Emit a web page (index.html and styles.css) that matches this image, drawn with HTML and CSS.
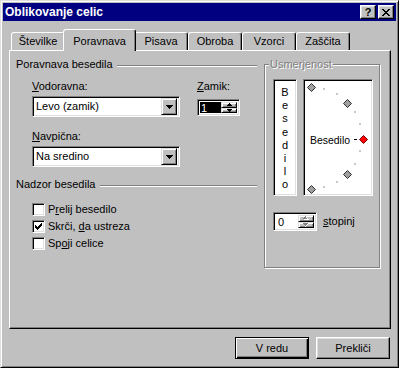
FILE: index.html
```html
<!DOCTYPE html>
<html>
<head>
<meta charset="utf-8">
<link rel="stylesheet" href="styles.css">
</head>
<body>
<div class="window">
  <div class="caption">
    <span class="title">Oblikovanje celic</span>
    <span class="cap-btns">
      <span class="cbtn help">?</span>
      <span class="cbtn close"><svg width="8" height="7" viewBox="0 0 8 7" shape-rendering="crispEdges"><path d="M0 0h2v1H0zM6 0h2v1H6zM1 1h2v1H1zM5 1h2v1H5zM2 2h4v1H2zM3 3h2v1H3zM2 4h4v1H2zM1 5h2v1H1zM5 5h2v1H5zM0 6h2v1H0zM6 6h2v1H6z" fill="#000"/></svg></span>
    </span>
  </div>
  <div class="client">
    <div class="tabs">
      <div class="tab">Številke</div>
      <div class="tab active">Poravnava</div>
      <div class="tab">Pisava</div>
      <div class="tab">Obroba</div>
      <div class="tab">Vzorci</div>
      <div class="tab">Zaščita</div>
    </div>
    <div class="panel">
      <div class="left">
        <div class="grp-h"><span>Poravnava besedila</span><i class="rule"></i></div>
        <div class="align-row">
          <div class="col-main">
            <div class="lbl"><u>V</u>odoravna:</div>
            <div class="combo"><span class="ctext">Levo (zamik)</span><span class="drop"><svg width="7" height="4" viewBox="0 0 7 4" shape-rendering="crispEdges"><path d="M0 0h7v1H0zM1 1h5v1H1zM2 2h3v1H2zM3 3h1v1H3z" fill="#000"/></svg></span></div>
            <div class="lbl lbl2"><u>N</u>avpična:</div>
            <div class="combo"><span class="ctext">Na sredino</span><span class="drop"><svg width="7" height="4" viewBox="0 0 7 4" shape-rendering="crispEdges"><path d="M0 0h7v1H0zM1 1h5v1H1zM2 2h3v1H2zM3 3h1v1H3z" fill="#000"/></svg></span></div>
          </div>
          <div class="col-zamik">
            <div class="lbl"><u>Z</u>amik:</div>
            <div class="spin spin-zamik">
              <span class="val sel">1</span>
              <span class="arrows">
                <span class="arr up"><svg width="5" height="3" viewBox="0 0 5 3" shape-rendering="crispEdges"><path d="M2 0h1v1H2zM1 1h3v1H1zM0 2h5v1H0z" fill="#000"/></svg></span>
                <span class="arr dn"><svg width="5" height="3" viewBox="0 0 5 3" shape-rendering="crispEdges"><path d="M0 0h5v1H0zM1 1h3v1H1zM2 2h1v1H2z" fill="#000"/></svg></span>
              </span>
            </div>
          </div>
        </div>
        <div class="grp-h grp-h2"><span>Nadzor besedila</span><i class="rule"></i></div>
        <div class="checks">
          <div class="chk"><span class="cb"></span><span>P<u>r</u>elij besedilo</span></div>
          <div class="chk"><span class="cb"><svg width="7" height="7" viewBox="0 0 7 7" shape-rendering="crispEdges"><path d="M0 2h1v3H0zM1 3h1v3H1zM2 4h1v3H2zM3 3h1v3H3zM4 2h1v3H4zM5 1h1v3H5zM6 0h1v3H6z" fill="#000"/></svg></span><span>Skrči, <u>d</u>a ustreza</span></div>
          <div class="chk"><span class="cb"></span><span>Sp<u>o</u>ji celice</span></div>
        </div>
      </div>
      <div class="orient">
        <span class="legend">Usmerjenost</span>
        <div class="orient-row">
          <div class="vbox">
            <span>B</span><span>e</span><span>s</span><span>e</span><span>d</span><span>i</span><span>l</span><span>o</span>
          </div>
          <div class="dial">
            <svg width="66" height="113" viewBox="0 0 66 113">
              <g fill="#c8c8c8" shape-rendering="crispEdges">
                <rect x="17" y="6" width="2" height="2"/>
                <rect x="30" y="11" width="2" height="2"/>
                <rect x="48" y="29" width="2" height="2"/>
                <rect x="53" y="41" width="2" height="2"/>
                <rect x="53" y="68" width="2" height="2"/>
                <rect x="48" y="81" width="2" height="2"/>
                <rect x="30" y="99" width="2" height="2"/>
                <rect x="17" y="104" width="2" height="2"/>
              </g>
              <g fill="#a0a0a0" stroke="#303030" stroke-width="1">
                <polygon points="5.5,1.5 9.5,5.5 5.5,9.5 1.5,5.5"/>
                <polygon points="41.5,17.5 45.5,21.5 41.5,25.5 37.5,21.5"/>
                <polygon points="41.5,88.5 45.5,92.5 41.5,96.5 37.5,92.5"/>
                <polygon points="5.5,103.5 9.5,107.5 5.5,111.5 1.5,107.5"/>
              </g>
              <polygon points="57.5,53.5 61.5,57.5 57.5,61.5 53.5,57.5" fill="#ff0000" stroke="#800000" stroke-width="1"/>
              <rect x="48" y="57" width="3" height="1" fill="#000" shape-rendering="crispEdges"/>
              <text x="4" y="62" class="dial-text" textLength="40" lengthAdjust="spacingAndGlyphs">Besedilo</text>
            </svg>
          </div>
        </div>
        <div class="deg-row">
          <div class="spin spin-deg">
            <span class="val">0</span>
            <span class="arrows">
              <span class="arr up"><svg width="6" height="4" viewBox="0 0 6 4" shape-rendering="crispEdges"><path d="M2 0h1v1H2zM1 1h3v1H1zM0 2h5v1H0z" fill="#808080"/><path d="M3 1h1v1H3zM4 2h1v1H4zM1 3h5v1H1z" fill="#fff"/></svg></span>
              <span class="arr dn"><svg width="6" height="4" viewBox="0 0 6 4" shape-rendering="crispEdges"><path d="M0 0h5v1H0zM1 1h3v1H1zM2 2h1v1H2z" fill="#808080"/><path d="M5 0h1v1H5zM4 1h1v1H4zM3 2h1v1H3zM2 3h1v1H2z" fill="#fff"/></svg></span>
            </span>
          </div>
          <span class="deg-lbl"><u>s</u>topinj</span>
        </div>
      </div>
    </div>
    <div class="actions">
      <div class="btn default">V redu</div>
      <div class="btn">Prekliči</div>
    </div>
  </div>
</div>
</body>
</html>
```
FILE: styles.css
```css
* { box-sizing: border-box; }

body {
  margin: 0;
  background: #c0c0c0;
  font-family: "Liberation Sans", Arial, sans-serif;
  font-size: 11px;
  color: #000;
}

u { text-decoration: underline; text-underline-offset: 1px; }

.window {
  width: 399px;
  height: 368px;
  background: #c0c0c0;
  border: 1px solid;
  border-color: #dfdfdf #000 #000 #dfdfdf;
  box-shadow: inset 1px 1px #fff, inset -1px -1px #808080;
  padding: 2px;
  display: flex;
  flex-direction: column;
}

.caption {
  height: 18px;
  flex: none;
  background: #000080;
  color: #fff;
  display: flex;
  align-items: center;
  justify-content: space-between;
  padding: 0 2px 0 2px;
}

.title {
  font-weight: bold;
  font-size: 12px;
  line-height: 14px;
}

.cap-btns {
  display: flex;
  gap: 2px;
}

.cbtn {
  width: 16px;
  height: 14px;
  background: #c0c0c0;
  border: 1px solid;
  border-color: #fff #000 #000 #fff;
  box-shadow: inset -1px -1px #808080, inset 1px 1px #dfdfdf;
  display: flex;
  align-items: center;
  justify-content: center;
  color: #000;
}

.cbtn.help {
  font-weight: bold;
  font-size: 11px;
  line-height: 12px;
}

.client {
  flex: 1;
  display: flex;
  flex-direction: column;
  padding: 8px 5px 0 6px;
}

.tabs {
  display: flex;
  height: 21px;
  padding-left: 2px;
  flex: none;
}

.tab {
  width: 54px;
  height: 18px;
  margin-top: 3px;
  border: 1px solid;
  border-bottom: 0;
  border-color: #fff #000 transparent #fff;
  box-shadow: inset -1px 0 #808080;
  border-radius: 3px 3px 0 0;
  text-align: center;
  line-height: 16px;
  background: #c0c0c0;
}

.tab.active {
  position: relative;
  z-index: 1;
  width: 73px;
  height: 22px;
  margin: 0 -2px -1px -2px;
  padding-top: 4px;
  line-height: 15px;
}

.panel {
  flex: none;
  width: 382px;
  height: 279px;
  border: 1px solid;
  border-color: #fff #000 #000 #fff;
  box-shadow: inset -1px -1px #808080;
  display: flex;
  padding-left: 6px;
}

.left {
  width: 241px;
  padding-top: 7px;
  display: flex;
  flex-direction: column;
}

.grp-h {
  display: flex;
  align-items: center;
  height: 13px;
  line-height: 13px;
}

.grp-h .rule {
  flex: 1;
  height: 2px;
  border-top: 1px solid #808080;
  border-bottom: 1px solid #fff;
  margin-left: 4px;
  margin-top: 3px;
}

.grp-h2 { margin-top: 11px; }

.align-row {
  display: flex;
  padding-left: 16px;
  margin-top: 9px;
}

.col-main {
  width: 148px;
  display: flex;
  flex-direction: column;
}

.col-zamik {
  margin-left: 17px;
  display: flex;
  flex-direction: column;
}

.lbl {
  height: 13px;
  line-height: 13px;
}

.lbl2 { margin-top: 13px; }

.combo {
  margin-top: 3px;
  height: 21px;
  display: flex;
  align-items: center;
  background: #fff;
  border: 1px solid;
  border-color: #808080 #fff #fff #808080;
  box-shadow: inset 1px 1px #000, inset -1px -1px #dfdfdf;
  padding: 2px 2px 2px 3px;
}

.ctext { flex: 1; line-height: 13px; }

.drop {
  width: 16px;
  height: 17px;
  background: #c0c0c0;
  border: 1px solid;
  border-color: #dfdfdf #000 #000 #dfdfdf;
  box-shadow: inset 1px 1px #fff, inset -1px -1px #808080;
  display: flex;
  align-items: center;
  justify-content: center;
}

.spin {
  display: flex;
  border: 1px solid;
  border-color: #808080 #fff #fff #808080;
  box-shadow: inset 1px 1px #000, inset -1px -1px #dfdfdf;
  padding: 2px;
  background: #fff;
}

.spin .val {
  flex: 1;
  line-height: 13px;
  padding-left: 1px;
}

.spin .val.sel {
  background: #000;
  color: #fff;
}

.arrows {
  width: 16px;
  display: flex;
  flex-direction: column;
}

.arr {
  background: #c0c0c0;
  border: 1px solid;
  border-color: #dfdfdf #000 #000 #dfdfdf;
  box-shadow: inset 1px 1px #fff, inset -1px -1px #808080;
  display: flex;
  align-items: center;
  justify-content: center;
}

.spin-zamik {
  width: 43px;
  height: 17px;
  margin-top: 6px;
}

.spin-zamik .arr.up { height: 7px; }
.spin-zamik .arr.dn { height: 6px; }

.spin-deg {
  width: 44px;
  height: 19px;
}

.spin-deg .val { padding-left: 2px; line-height: 15px; }
.spin-deg .arr.up { height: 8px; }
.spin-deg .arr.dn { height: 7px; }

.checks {
  margin-top: 10px;
  padding-left: 16px;
  display: flex;
  flex-direction: column;
}

.chk {
  height: 17px;
  display: flex;
  align-items: center;
  gap: 3px;
  line-height: 13px;
}

.cb {
  width: 13px;
  height: 13px;
  background: #fff;
  border: 1px solid;
  border-color: #808080 #fff #fff #808080;
  box-shadow: inset 1px 1px #000, inset -1px -1px #dfdfdf;
  display: flex;
  align-items: center;
  justify-content: center;
}

.orient {
  position: relative;
  width: 116px;
  height: 204px;
  margin-left: 7px;
  margin-top: 13px;
  border: 1px solid #808080;
  box-shadow: inset 1px 1px #fff, 1px 1px #fff;
  padding: 14px 0 0 8px;
}

.legend {
  position: absolute;
  top: -7px;
  left: 4px;
  padding: 0 1px;
  background: #c0c0c0;
  color: #808080;
  text-shadow: 1px 1px #fff;
  line-height: 13px;
}

.orient-row {
  display: flex;
  gap: 6px;
}

.vbox, .dial {
  height: 117px;
  background: #fff;
  border: 1px solid;
  border-color: #808080 #fff #fff #808080;
  box-shadow: inset 1px 1px #000, inset -1px -1px #dfdfdf;
}

.vbox {
  width: 24px;
  padding-top: 6px;
  display: flex;
  flex-direction: column;
  align-items: center;
}

.vbox span {
  display: block;
  line-height: 13.2px;
  height: 13.2px;
}

.dial {
  width: 70px;
  padding: 2px;
}

.dial svg { display: block; }

.dial-text {
  font-family: "Liberation Sans", Arial, sans-serif;
  font-size: 11px;
  fill: #000;
}

.deg-row {
  display: flex;
  align-items: center;
  margin-top: 16px;
}

.deg-lbl {
  margin-left: 6px;
  line-height: 13px;
}

.actions {
  display: flex;
  justify-content: flex-end;
  gap: 7px;
  margin-top: 8px;
  padding-right: 1px;
}

.btn {
  width: 74px;
  height: 22px;
  background: #c0c0c0;
  border: 1px solid;
  border-color: #fff #000 #000 #fff;
  box-shadow: inset -1px -1px #808080, inset 1px 1px #dfdfdf;
  display: flex;
  align-items: center;
  justify-content: center;
  line-height: 13px;
}

.btn.default {
  border-color: #000;
  box-shadow: inset 1px 1px #fff, inset -1px -1px #000, inset -2px -2px #808080;
}
```
